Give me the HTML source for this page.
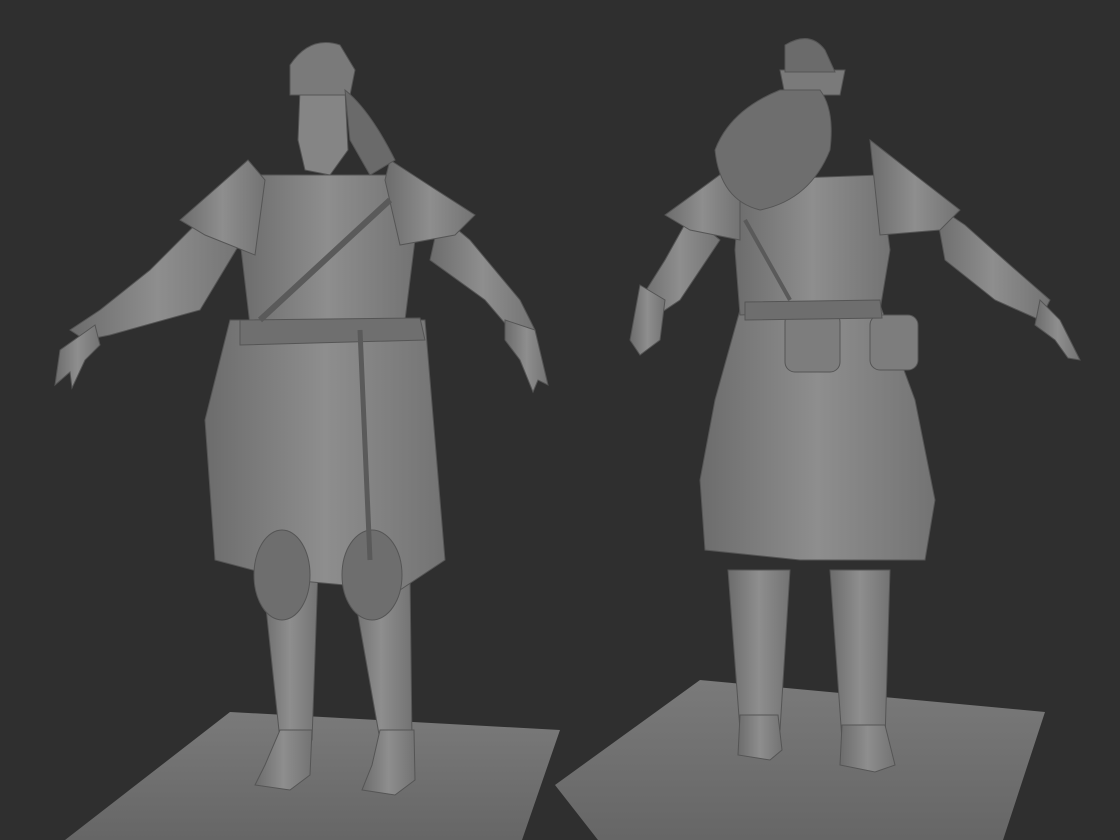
<!DOCTYPE html>
<html><head><meta charset="utf-8"><style>
html,body{margin:0;padding:0;background:#2f2f2f;}
svg{display:block}
</style></head><body>
<svg width="1120" height="840" viewBox="0 0 1120 840" xmlns="http://www.w3.org/2000/svg">
<defs>
<linearGradient id="g1" x1="0" y1="0" x2="1" y2="0">
<stop offset="0" stop-color="#6c6c6c"/><stop offset="0.5" stop-color="#8e8e8e"/><stop offset="1" stop-color="#737373"/>
</linearGradient>
<linearGradient id="pl" x1="0" y1="0" x2="0" y2="1">
<stop offset="0" stop-color="#7a7a7a"/><stop offset="1" stop-color="#666"/>
</linearGradient>
</defs>
<rect width="1120" height="840" fill="#2f2f2f"/>
<!-- plates -->
<polygon points="65,840 230,712 560,730 522,840" fill="url(#pl)"/>
<polygon points="555,785 700,680 1045,712 1003,840 598,840" fill="url(#pl)"/>

<!-- LEFT FIGURE -->
<g fill="url(#g1)" stroke="#555" stroke-width="1">
<!-- arms -->
<polygon points="205,215 245,235 200,310 110,335 85,340 70,330 100,310 150,270"/>
<path d="M95,325 L60,350 L55,385 L70,372 L72,388 L85,360 L100,345 Z"/>
<polygon points="440,215 470,240 520,300 535,330 515,335 485,300 430,260"/>
<path d="M505,320 L535,330 L548,385 L538,380 L533,392 L520,360 L505,340 Z"/>
<!-- legs -->
<polygon points="262,570 318,570 312,740 280,740"/>
<polygon points="350,570 410,575 412,740 380,740"/>
<path d="M280,730 L312,730 L310,775 L290,790 L255,785 L265,765 Z"/>
<path d="M380,730 L414,730 L415,780 L395,795 L362,790 L372,765 Z"/>
<!-- skirt -->
<polygon points="230,320 425,320 445,560 400,590 290,580 215,560 205,420"/>
<!-- knees -->
<ellipse cx="282" cy="575" rx="28" ry="45" fill="#6e6e6e"/>
<ellipse cx="372" cy="575" rx="30" ry="45" fill="#6e6e6e"/>
<!-- torso -->
<polygon points="250,175 400,175 415,240 405,320 250,325 240,240"/>
<!-- shoulders -->
<polygon points="248,160 180,220 205,235 255,255 265,180"/>
<polygon points="390,160 475,215 455,235 400,245 385,180"/>
<!-- belt -->
<polygon points="240,320 420,318 425,340 240,345" fill="#6f6f6f"/>
<!-- neck/head -->
<path d="M300,90 L345,90 L348,150 L330,175 L305,170 L298,140 Z" fill="#858585"/>
<path d="M290,65 Q310,35 340,45 L355,70 L350,95 L290,95 Z" fill="#7a7a7a"/>
<path d="M345,90 Q370,110 395,160 L370,175 L350,140 Z" fill="#6a6a6a"/>
</g>
<line x1="260" y1="320" x2="390" y2="200" stroke="#5a5a5a" stroke-width="6"/>
<line x1="360" y1="330" x2="370" y2="560" stroke="#5a5a5a" stroke-width="5"/>

<!-- RIGHT FIGURE -->
<g fill="url(#g1)" stroke="#555" stroke-width="1">
<polygon points="690,215 720,240 680,300 650,320 640,300 665,260"/>
<path d="M640,285 L665,300 L660,340 L640,355 L630,340 Z"/>
<polygon points="935,205 965,225 1010,265 1050,300 1040,320 995,300 945,260"/>
<path d="M1040,300 L1060,320 L1080,360 L1068,358 L1055,340 L1035,325 Z"/>
<!-- legs -->
<polygon points="728,570 790,570 780,730 740,730"/>
<polygon points="830,570 890,570 885,740 842,740"/>
<path d="M740,715 L778,715 L782,750 L770,760 L738,755 Z"/>
<path d="M842,725 L885,725 L895,765 L875,772 L840,765 Z"/>
<!-- skirt -->
<polygon points="740,310 880,305 915,400 935,500 925,560 800,560 705,550 700,480 715,400"/>
<!-- torso -->
<polygon points="740,180 880,175 890,250 880,310 740,315 735,250"/>
<!-- shoulders -->
<polygon points="740,160 665,215 690,230 740,240"/>
<polygon points="870,140 960,210 940,230 880,235"/>
<!-- pouches -->
<rect x="785" y="312" width="55" height="60" rx="10" fill="#7d7d7d"/>
<rect x="870" y="315" width="48" height="55" rx="10" fill="#7d7d7d"/>
<polygon points="745,302 880,300 882,318 745,320" fill="#6e6e6e"/>
<!-- head/hair -->
<path d="M780,70 L845,70 L840,95 L785,95 Z" fill="#7a7a7a"/>
<path d="M785,45 Q810,30 825,50 L835,72 L785,72 Z" fill="#6b6b6b"/>
<path d="M780,90 Q730,110 715,150 Q720,200 760,210 Q810,200 830,150 Q835,110 820,90 Z" fill="#6e6e6e"/>
</g>
<line x1="745" y1="220" x2="790" y2="300" stroke="#5a5a5a" stroke-width="4"/>
</svg>
</body></html>
